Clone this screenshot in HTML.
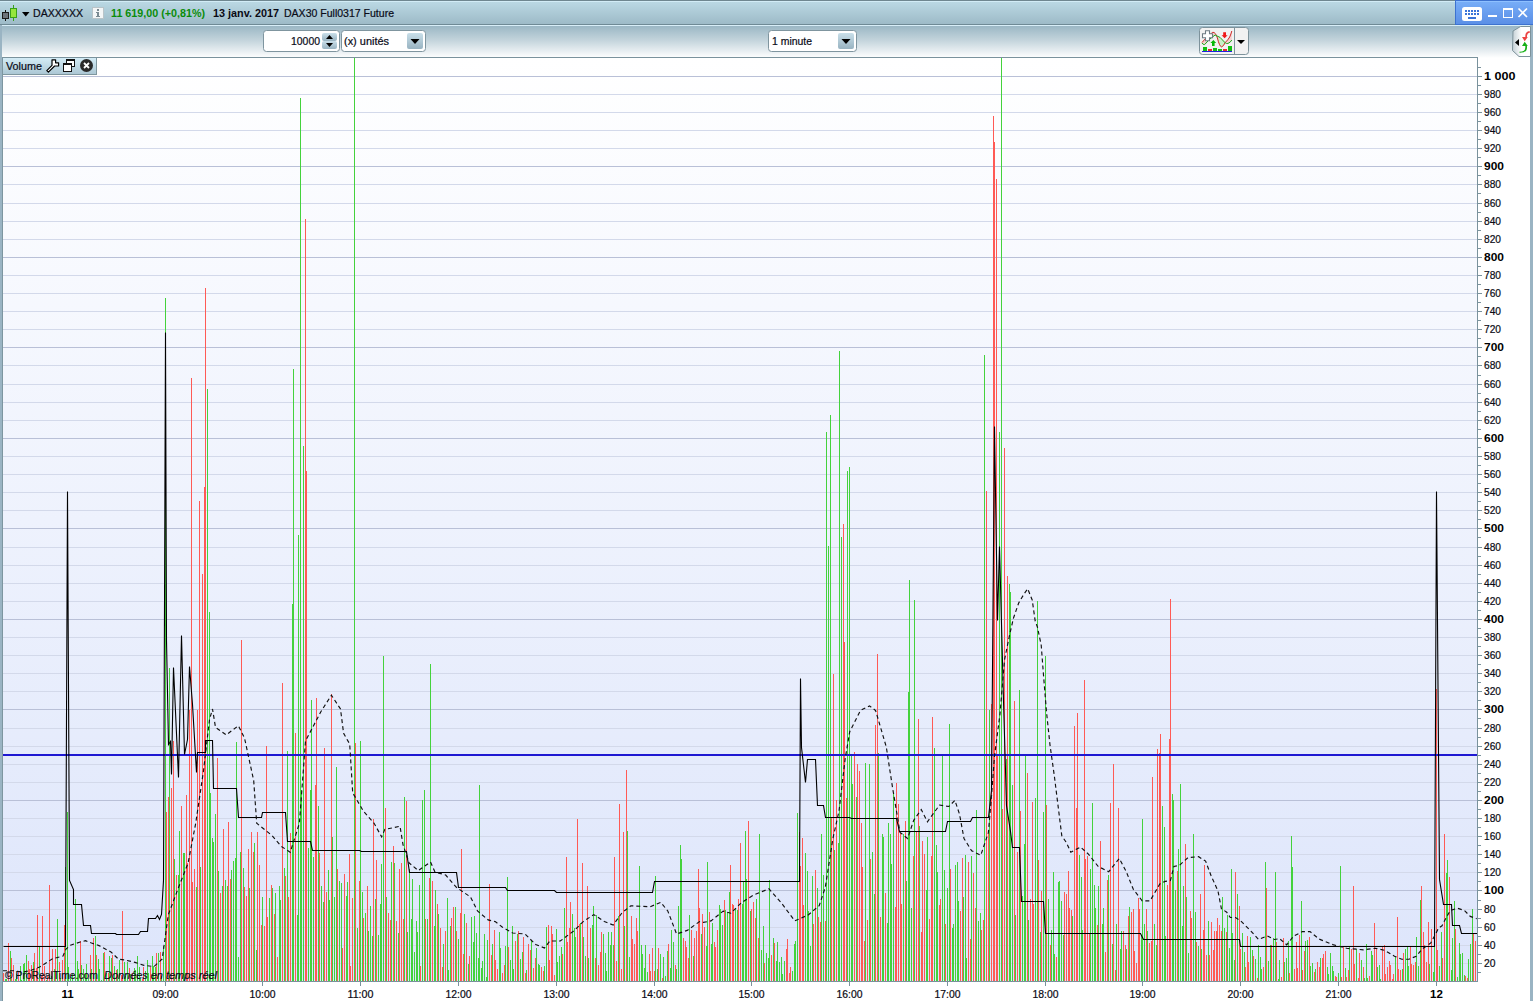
<!DOCTYPE html><html><head><meta charset="utf-8"><style>
html,body{margin:0;padding:0;width:1533px;height:1001px;overflow:hidden;background:#fff;}
svg{position:absolute;left:0;top:0;display:block}
text{font-family:"Liberation Sans",sans-serif;}
</style></head><body>
<svg width="1533" height="1001" viewBox="0 0 1533 1001" shape-rendering="crispEdges">
<defs>
<linearGradient id="gTitle" x1="0" y1="0" x2="0" y2="1"><stop offset="0" stop-color="#bddbe6"/><stop offset="1" stop-color="#9cb9c6"/></linearGradient>
<linearGradient id="gTool" x1="0" y1="0" x2="0" y2="1"><stop offset="0" stop-color="#98b5c3"/><stop offset="0.45" stop-color="#c2d3db"/><stop offset="1" stop-color="#ffffff"/></linearGradient>
<linearGradient id="gBlue" x1="0" y1="0" x2="0" y2="1"><stop offset="0" stop-color="#78aef8"/><stop offset="1" stop-color="#5b8fe6"/></linearGradient>
<linearGradient id="gChart" x1="0" y1="0" x2="0" y2="1"><stop offset="0" stop-color="#ffffff"/><stop offset="1" stop-color="#dde5fb"/></linearGradient>
<linearGradient id="gTab" x1="0" y1="0" x2="0" y2="1"><stop offset="0" stop-color="#d4ecf6"/><stop offset="1" stop-color="#a9c5d2"/></linearGradient>
<linearGradient id="gBtn" x1="0" y1="0" x2="0" y2="1"><stop offset="0" stop-color="#c9dfe9"/><stop offset="1" stop-color="#98b3c1"/></linearGradient>
<linearGradient id="gSide" x1="0" y1="0" x2="1" y2="0"><stop offset="0" stop-color="#c4d0d6"/><stop offset="0.5" stop-color="#ffffff"/><stop offset="1" stop-color="#ffffff"/></linearGradient>
</defs>

<rect x="0" y="0" width="1533" height="25" fill="url(#gTitle)"/>
<rect x="0" y="0" width="1533" height="1" fill="#6f8790"/>
<rect x="0" y="1" width="1533" height="1" fill="#d2ecf6"/>
<rect x="0" y="24" width="1533" height="1" fill="#6f8a95"/>
<rect x="0" y="25" width="1533" height="33" fill="url(#gTool)"/>
<rect x="0" y="25" width="1533" height="1" fill="#d8eef8"/>
<rect x="1455" y="0" width="78" height="25" fill="#3d72cf"/>
<rect x="1456" y="1" width="77" height="23" fill="url(#gBlue)"/>
<rect x="1456" y="1" width="77" height="1" fill="#8ec0ff"/>
<rect x="1462" y="7" width="20" height="14" rx="2.5" fill="#ffffff" shape-rendering="geometricPrecision"/>
<rect x="1465" y="10" width="2" height="2" fill="#3b74d8"/>
<rect x="1465" y="13" width="2" height="2" fill="#3b74d8"/>
<rect x="1468" y="10" width="2" height="2" fill="#3b74d8"/>
<rect x="1468" y="13" width="2" height="2" fill="#3b74d8"/>
<rect x="1471" y="10" width="2" height="2" fill="#3b74d8"/>
<rect x="1471" y="13" width="2" height="2" fill="#3b74d8"/>
<rect x="1474" y="10" width="2" height="2" fill="#3b74d8"/>
<rect x="1474" y="13" width="2" height="2" fill="#3b74d8"/>
<rect x="1477" y="10" width="2" height="2" fill="#3b74d8"/>
<rect x="1477" y="13" width="2" height="2" fill="#3b74d8"/>
<rect x="1468" y="17" width="8" height="2" fill="#3b74d8"/>
<rect x="1488" y="15" width="9" height="2" fill="#ffffff"/>
<rect x="1503" y="8" width="9" height="9" fill="none" stroke="#ffffff" stroke-width="1" />
<rect x="1503" y="8" width="9" height="2" fill="#ffffff"/>
<path d="M1518.5 8.5 L1527 17 M1527 8.5 L1518.5 17" stroke="#ffffff" stroke-width="1.6" shape-rendering="geometricPrecision"/>
<rect x="0" y="25" width="2" height="976" fill="#9ab4c3"/>
<rect x="2" y="57" width="1" height="944" fill="#7d96a0"/>
<rect x="1530" y="25" width="3" height="976" fill="#9ab4c3"/>
<rect x="5" y="10" width="1" height="11" fill="#111"/>
<rect x="2" y="12" width="7" height="7" fill="#1a1a1a"/><rect x="3" y="13" width="5" height="5" fill="#6d737a"/>
<rect x="13" y="5" width="1" height="16" fill="#3aa01a"/>
<rect x="10" y="8" width="7" height="10" fill="#3aa01a"/><rect x="11" y="9" width="5" height="8" fill="#96e63c"/>
<path d="M22 12 L29.5 12 L25.75 16.5 Z" fill="#000" shape-rendering="geometricPrecision"/>
<text x="33" y="17" font-size="11" fill="#0a0c18" stroke="#0a0c18" stroke-width="0.22" textLength="50" lengthAdjust="spacingAndGlyphs">DAXXXXX</text>
<rect x="92.5" y="7.5" width="11" height="11" fill="#f4f6f7" stroke="#b9c4c9" stroke-width="1"/>
<rect x="97" y="9" width="2" height="2" fill="#7a8a92"/><rect x="97" y="12" width="2" height="5" fill="#7a8a92"/><rect x="96" y="12" width="1" height="1" fill="#7a8a92"/><rect x="96" y="16" width="4" height="1" fill="#7a8a92"/>
<text x="111" y="17" font-size="11" font-weight="bold" fill="#0a8c0a" textLength="94" lengthAdjust="spacingAndGlyphs">11 619,00 (+0,81%)</text>
<text x="213" y="17" font-size="11" font-weight="bold" fill="#0a0a14" textLength="66" lengthAdjust="spacingAndGlyphs">13 janv. 2017</text>
<text x="284" y="17" font-size="11" fill="#0a0c18" stroke="#0a0c18" stroke-width="0.22" textLength="110" lengthAdjust="spacingAndGlyphs">DAX30 Full0317 Future</text>
<rect x="263.5" y="30.5" width="76" height="21" rx="3" fill="#ffffff" stroke="#7f959f" stroke-width="1" shape-rendering="geometricPrecision"/>
<rect x="322" y="33" width="15" height="8" rx="2" fill="url(#gBtn)" shape-rendering="geometricPrecision"/>
<rect x="322" y="41" width="15" height="8" rx="2" fill="url(#gBtn)" shape-rendering="geometricPrecision"/>
<path d="M326 39 L333 39 L329.5 35 Z" fill="#000" shape-rendering="geometricPrecision"/>
<path d="M326 43 L333 43 L329.5 47 Z" fill="#000" shape-rendering="geometricPrecision"/>
<text x="291" y="45" font-size="11" fill="#0a0c18" stroke="#0a0c18" stroke-width="0.22" textLength="29" lengthAdjust="spacingAndGlyphs">10000</text>
<rect x="341.5" y="30.5" width="84" height="21" rx="3" fill="#ffffff" stroke="#7f959f" stroke-width="1" shape-rendering="geometricPrecision"/>
<rect x="407" y="33" width="16" height="16" rx="2" fill="url(#gBtn)" shape-rendering="geometricPrecision"/>
<path d="M410.5 39 L419.5 39 L415 44 Z" fill="#000" shape-rendering="geometricPrecision"/>
<text x="344" y="45" font-size="11" fill="#0a0c18" stroke="#0a0c18" stroke-width="0.22" textLength="45" lengthAdjust="spacingAndGlyphs">(x) unités</text>
<rect x="768.5" y="30.5" width="88" height="21" rx="3" fill="#ffffff" stroke="#7f959f" stroke-width="1" shape-rendering="geometricPrecision"/>
<rect x="838" y="33" width="16" height="16" rx="2" fill="url(#gBtn)" shape-rendering="geometricPrecision"/>
<path d="M841.5 39 L850.5 39 L846 44 Z" fill="#000" shape-rendering="geometricPrecision"/>
<text x="772" y="45" font-size="11" fill="#0a0c18" stroke="#0a0c18" stroke-width="0.22" textLength="40" lengthAdjust="spacingAndGlyphs">1 minute</text>
<rect x="1199.5" y="27.5" width="49" height="27" rx="3" fill="#f2f2f2" stroke="#7d929b" stroke-width="1" shape-rendering="geometricPrecision"/>
<rect x="1234" y="28" width="1" height="26" fill="#7d929b"/>
<path d="M1237 40 L1245 40 L1241 44 Z" fill="#000" shape-rendering="geometricPrecision"/>
<g shape-rendering="geometricPrecision">
<path d="M1202 42.5 Q1207 36 1212.8 32.3 Q1215.5 32 1217.4 38 Q1219.5 46.5 1221.5 46.9 Q1223.5 46.5 1225.2 42.5 Q1228 40 1229.7 37 Q1231 34 1231.8 31 L1231.8 40 Q1229 43.5 1227.9 43.5 Q1226 43.5 1225.2 42.8 Q1220 38 1215.1 35 Q1208 39 1204.6 44.6 Q1203 44 1202 43 Z" fill="#f4c8c8" fill-opacity="0.8"/>
<path d="M1217.4 38 Q1219.5 46.5 1221.5 46.9 Q1223.5 46.5 1225.2 42.8 Q1220 38 1217.4 37.5 Z" fill="#c8f0c8"/>
<path d="M1202 42.5 Q1207 36 1212.8 32.3 Q1215.5 32 1217.4 38 Q1219.5 46.5 1221.5 46.9 Q1223.5 46.5 1225.2 42.5 Q1228 40 1229.7 37 Q1231 34 1231.8 31" fill="none" stroke="#d02828" stroke-width="1"/>
<path d="M1202 43 Q1203 44.8 1204.6 44.6 Q1210 38 1215.1 35 Q1220 36 1225.2 42.8 Q1226.5 43.8 1227.9 43.5 Q1230.5 42.5 1231.8 40" fill="none" stroke="#18a818" stroke-width="1"/>
<path d="M1223.2 32.3 h2.8 v3 h1.6 l-3 3 l-3 -3 h1.6z" fill="#f01818"/>
<path d="M1213.4 40 l2.8 3 h-1.6 v3 h-2.6 v-3 h-1.6z" fill="#08b808"/>
<path d="M1205.5 30.7 h4 v3 h3 v4 h-3 v3 h-4 v-3 h-3 v-4 h3z" fill="#fff" stroke="#6e7b83" stroke-width="1.1"/>
</g>
<rect x="1203" y="47" width="4" height="4" fill="#10c010"/><rect x="1208" y="49" width="4" height="2" fill="#e03030"/><rect x="1213" y="48" width="4" height="3" fill="#10c010"/><rect x="1218" y="49" width="4" height="2" fill="#10c010"/><rect x="1223" y="49" width="4" height="2" fill="#e03030"/><rect x="1228" y="46" width="4" height="5" fill="#10c010"/>
<rect x="1202" y="51" width="30" height="1" fill="#2020e0"/>
<path d="M1530.5 26.5 L1520.5 26.5 L1513 31 L1512.5 50.5 L1519 56.5 L1530.5 56.5 Z" fill="url(#gSide)" stroke="#7d929b" stroke-width="1" shape-rendering="geometricPrecision"/>
<path d="M1515 42.5 L1519 39 L1519 46 Z" fill="#000" shape-rendering="geometricPrecision"/>
<path d="M1529.5 31 Q1525.5 31.5 1525.3 35.5 L1525.3 37 L1522 37 L1524.7 41.3 L1527.8 37 L1527 37 L1527 35.5 Q1527.3 33 1530 32.5 Z" fill="#ec4444" shape-rendering="geometricPrecision"/>
<path d="M1519.5 51.8 Q1525.3 51.8 1525.3 47.5 L1525.3 46 L1522 46 L1524.7 41.8 L1527.8 46 L1527 46 L1527 47.5 Q1527 53 1519.5 52.8 Z" fill="#18b018" shape-rendering="geometricPrecision"/>
<rect x="3" y="58" width="1474" height="923" fill="url(#gChart)"/>
<rect x="3" y="963" width="1474" height="1" fill="#d3d9ea"/>
<rect x="3" y="945" width="1474" height="1" fill="#d3d9ea"/>
<rect x="3" y="927" width="1474" height="1" fill="#d3d9ea"/>
<rect x="3" y="909" width="1474" height="1" fill="#d3d9ea"/>
<rect x="3" y="890" width="1474" height="1" fill="#b9c0d7"/>
<rect x="3" y="872" width="1474" height="1" fill="#d3d9ea"/>
<rect x="3" y="854" width="1474" height="1" fill="#d3d9ea"/>
<rect x="3" y="836" width="1474" height="1" fill="#d3d9ea"/>
<rect x="3" y="818" width="1474" height="1" fill="#d3d9ea"/>
<rect x="3" y="800" width="1474" height="1" fill="#b9c0d7"/>
<rect x="3" y="782" width="1474" height="1" fill="#d3d9ea"/>
<rect x="3" y="764" width="1474" height="1" fill="#d3d9ea"/>
<rect x="3" y="746" width="1474" height="1" fill="#d3d9ea"/>
<rect x="3" y="728" width="1474" height="1" fill="#d3d9ea"/>
<rect x="3" y="709" width="1474" height="1" fill="#b9c0d7"/>
<rect x="3" y="691" width="1474" height="1" fill="#d3d9ea"/>
<rect x="3" y="673" width="1474" height="1" fill="#d3d9ea"/>
<rect x="3" y="655" width="1474" height="1" fill="#d3d9ea"/>
<rect x="3" y="637" width="1474" height="1" fill="#d3d9ea"/>
<rect x="3" y="619" width="1474" height="1" fill="#b9c0d7"/>
<rect x="3" y="601" width="1474" height="1" fill="#d3d9ea"/>
<rect x="3" y="583" width="1474" height="1" fill="#d3d9ea"/>
<rect x="3" y="565" width="1474" height="1" fill="#d3d9ea"/>
<rect x="3" y="547" width="1474" height="1" fill="#d3d9ea"/>
<rect x="3" y="528" width="1474" height="1" fill="#b9c0d7"/>
<rect x="3" y="510" width="1474" height="1" fill="#d3d9ea"/>
<rect x="3" y="492" width="1474" height="1" fill="#d3d9ea"/>
<rect x="3" y="474" width="1474" height="1" fill="#d3d9ea"/>
<rect x="3" y="456" width="1474" height="1" fill="#d3d9ea"/>
<rect x="3" y="438" width="1474" height="1" fill="#b9c0d7"/>
<rect x="3" y="420" width="1474" height="1" fill="#d3d9ea"/>
<rect x="3" y="402" width="1474" height="1" fill="#d3d9ea"/>
<rect x="3" y="384" width="1474" height="1" fill="#d3d9ea"/>
<rect x="3" y="365" width="1474" height="1" fill="#d3d9ea"/>
<rect x="3" y="347" width="1474" height="1" fill="#b9c0d7"/>
<rect x="3" y="329" width="1474" height="1" fill="#d3d9ea"/>
<rect x="3" y="311" width="1474" height="1" fill="#d3d9ea"/>
<rect x="3" y="293" width="1474" height="1" fill="#d3d9ea"/>
<rect x="3" y="275" width="1474" height="1" fill="#d3d9ea"/>
<rect x="3" y="257" width="1474" height="1" fill="#b9c0d7"/>
<rect x="3" y="239" width="1474" height="1" fill="#d3d9ea"/>
<rect x="3" y="221" width="1474" height="1" fill="#d3d9ea"/>
<rect x="3" y="203" width="1474" height="1" fill="#d3d9ea"/>
<rect x="3" y="184" width="1474" height="1" fill="#d3d9ea"/>
<rect x="3" y="166" width="1474" height="1" fill="#b9c0d7"/>
<rect x="3" y="148" width="1474" height="1" fill="#d3d9ea"/>
<rect x="3" y="130" width="1474" height="1" fill="#d3d9ea"/>
<rect x="3" y="112" width="1474" height="1" fill="#d3d9ea"/>
<rect x="3" y="94" width="1474" height="1" fill="#d3d9ea"/>
<rect x="3" y="76" width="1474" height="1" fill="#b9c0d7"/>
<path d="M3.5 981V973M8.5 981V943M11.5 981V958M13.5 981V965M18.5 981V972M28.5 981V961M29.5 981V969M31.5 981V965M34.5 981V953M36.5 981V968M37.5 981V915M41.5 981V976M42.5 981V916M44.5 981V966M47.5 981V976M49.5 981V885M52.5 981V949M55.5 981V949M59.5 981V962M62.5 981V960M64.5 981V925M80.5 981V941M90.5 981V955M93.5 981V938M96.5 981V955M104.5 981V952M108.5 981V973M112.5 981V955M116.5 981V970M121.5 981V975M122.5 981V911M129.5 981V968M132.5 981V973M142.5 981V979M143.5 981V967M150.5 981V967M156.5 981V953M160.5 981V952M166.5 981V812M168.5 981V797M171.5 981V788M173.5 981V741M176.5 981V875M181.5 981V806M186.5 981V795M187.5 981V863M189.5 981V710M191.5 981V378M192.5 981V882M194.5 981V869M197.5 981V710M199.5 981V501M202.5 981V574M204.5 981V487M205.5 981V288M217.5 981V758M220.5 981V893M223.5 981V829M228.5 981V822M230.5 981V879M241.5 981V640M244.5 981V887M246.5 981V896M248.5 981V849M251.5 981V832M253.5 981V852M257.5 981V832M259.5 981V865M261.5 981V925M264.5 981V926M266.5 981V746M267.5 981V917M271.5 981V885M274.5 981V914M277.5 981V957M282.5 981V683M285.5 981V876M288.5 981V897M290.5 981V833M295.5 981V733M305.5 981V219M306.5 981V471M315.5 981V785M316.5 981V698M319.5 981V853M324.5 981V748M326.5 981V892M331.5 981V694M337.5 981V869M342.5 981V948M344.5 981V874M349.5 981V854M350.5 981V966M352.5 981V898M355.5 981V743M359.5 981V881M363.5 981V918M367.5 981V886M373.5 981V819M376.5 981V860M385.5 981V808M388.5 981V913M390.5 981V920M393.5 981V846M396.5 981V921M399.5 981V869M401.5 981V863M403.5 981V919M406.5 981V801M420.5 981V966M425.5 981V919M429.5 981V878M432.5 981V881M437.5 981V904M440.5 981V928M442.5 981V967M445.5 981V931M451.5 981V918M453.5 981V907M456.5 981V931M460.5 981V913M461.5 981V849M463.5 981V954M466.5 981V923M469.5 981V956M489.5 981V884M491.5 981V955M494.5 981V930M495.5 981V960M497.5 981V969M502.5 981V973M504.5 981V965M508.5 981V947M515.5 981V941M518.5 981V931M523.5 981V937M525.5 981V973M528.5 981V944M530.5 981V950M533.5 981V968M535.5 981V958M541.5 981V967M543.5 981V971M548.5 981V925M549.5 981V960M551.5 981V926M552.5 981V934M554.5 981V975M562.5 981V954M566.5 981V857M567.5 981V942M569.5 981V928M570.5 981V902M577.5 981V819M579.5 981V924M582.5 981V863M587.5 981V886M590.5 981V928M595.5 981V958M598.5 981V965M600.5 981V952M601.5 981V932M614.5 981V857M616.5 981V961M619.5 981V804M621.5 981V969M623.5 981V832M626.5 981V770M631.5 981V916M632.5 981V939M634.5 981V944M636.5 981V918M637.5 981V931M649.5 981V954M650.5 981V971M652.5 981V948M654.5 981V971M658.5 981V948M662.5 981V978M668.5 981V944M675.5 981V965M683.5 981V938M685.5 981V941M686.5 981V947M688.5 981V958M691.5 981V930M694.5 981V938M696.5 981V931M698.5 981V869M699.5 981V908M702.5 981V914M704.5 981V927M709.5 981V912M714.5 981V942M715.5 981V947M717.5 981V930M724.5 981V900M730.5 981V865M732.5 981V904M733.5 981V905M738.5 981V899M740.5 981V843M748.5 981V821M751.5 981V909M753.5 981V902M755.5 981V918M758.5 981V938M764.5 981V963M771.5 981V955M774.5 981V943M786.5 981V949M787.5 981V939M789.5 981V973M790.5 981V967M799.5 981V832M800.5 981V866M802.5 981V838M803.5 981V905M813.5 981V924M815.5 981V870M818.5 981V917M820.5 981V922M825.5 981V921M831.5 981V818M833.5 981V674M836.5 981V800M843.5 981V524M844.5 981V642M846.5 981V798M854.5 981V752M857.5 981V764M859.5 981V771M861.5 981V823M862.5 981V867M864.5 981V941M867.5 981V920M870.5 981V859M875.5 981V725M877.5 981V654M880.5 981V917M885.5 981V893M895.5 981V907M896.5 981V783M898.5 981V804M900.5 981V833M901.5 981V904M905.5 981V821M913.5 981V856M916.5 981V831M918.5 981V719M921.5 981V932M922.5 981V841M924.5 981V854M929.5 981V919M931.5 981V856M932.5 981V717M939.5 981V905M940.5 981V899M945.5 981V924M950.5 981V869M960.5 981V911M962.5 981V858M968.5 981V862M970.5 981V939M973.5 981V873M975.5 981V908M981.5 981V930M983.5 981V920M986.5 981V491M988.5 981V831M991.5 981V704M993.5 981V116M994.5 981V142M996.5 981V179M997.5 981V756M1002.5 981V809M1004.5 981V448M1007.5 981V576M1014.5 981V701M1017.5 981V852M1020.5 981V811M1027.5 981V773M1030.5 981V899M1032.5 981V802M1033.5 981V904M1038.5 981V860M1041.5 981V891M1046.5 981V805M1050.5 981V945M1056.5 981V957M1064.5 981V892M1066.5 981V894M1068.5 981V871M1069.5 981V908M1071.5 981V910M1074.5 981V726M1076.5 981V808M1077.5 981V713M1084.5 981V680M1085.5 981V859M1087.5 981V856M1089.5 981V934M1097.5 981V925M1100.5 981V841M1105.5 981V952M1107.5 981V880M1110.5 981V803M1113.5 981V764M1115.5 981V970M1118.5 981V808M1123.5 981V931M1125.5 981V945M1128.5 981V916M1131.5 981V912M1133.5 981V909M1134.5 981V951M1136.5 981V963M1138.5 981V898M1139.5 981V909M1146.5 981V909M1149.5 981V943M1151.5 981V941M1152.5 981V777M1157.5 981V749M1159.5 981V753M1160.5 981V734M1167.5 981V885M1169.5 981V739M1170.5 981V599M1177.5 981V871M1185.5 981V844M1190.5 981V911M1191.5 981V918M1196.5 981V942M1200.5 981V894M1203.5 981V930M1204.5 981V865M1206.5 981V955M1209.5 981V955M1211.5 981V922M1213.5 981V950M1214.5 981V931M1216.5 981V931M1217.5 981V918M1219.5 981V925M1221.5 981V931M1226.5 981V932M1235.5 981V872M1239.5 981V906M1240.5 981V949M1245.5 981V967M1247.5 981V936M1248.5 981V962M1253.5 981V956M1257.5 981V978M1263.5 981V967M1266.5 981V888M1271.5 981V945M1276.5 981V942M1281.5 981V977M1283.5 981V938M1289.5 981V973M1294.5 981V969M1296.5 981V942M1297.5 981V968M1299.5 981V935M1302.5 981V970M1304.5 981V951M1309.5 981V937M1314.5 981V972M1317.5 981V962M1319.5 981V967M1322.5 981V958M1323.5 981V954M1325.5 981V951M1335.5 981V976M1336.5 981V977M1341.5 981V977M1343.5 981V946M1346.5 981V977M1348.5 981V970M1351.5 981V949M1353.5 981V886M1354.5 981V964M1358.5 981V978M1359.5 981V953M1363.5 981V967M1369.5 981V976M1374.5 981V923M1376.5 981V949M1382.5 981V946M1384.5 981V945M1385.5 981V974M1387.5 981V967M1389.5 981V961M1390.5 981V965M1392.5 981V979M1393.5 981V974M1397.5 981V917M1398.5 981V969M1400.5 981V970M1403.5 981V953M1410.5 981V946M1411.5 981V964M1413.5 981V965M1415.5 981V962M1421.5 981V886M1423.5 981V932M1424.5 981V945M1426.5 981V962M1428.5 981V922M1431.5 981V929M1436.5 981V689M1437.5 981V950M1442.5 981V958M1444.5 981V834M1449.5 981V877M1455.5 981V929M1465.5 981V976M1467.5 981V978M1473.5 981V934M1475.5 981V941" stroke="#ff5a55" stroke-width="1" fill="none"/>
<path d="M5.5 981V979M6.5 981V979M10.5 981V951M15.5 981V979M16.5 981V974M20.5 981V966M21.5 981V980M23.5 981V964M24.5 981V963M26.5 981V955M33.5 981V962M39.5 981V947M46.5 981V980M51.5 981V976M54.5 981V969M57.5 981V919M60.5 981V978M65.5 981V867M67.5 981V812M68.5 981V967M70.5 981V977M72.5 981V974M75.5 981V899M77.5 981V961M78.5 981V969M81.5 981V965M83.5 981V969M85.5 981V974M86.5 981V964M88.5 981V978M91.5 981V969M95.5 981V936M98.5 981V959M99.5 981V969M101.5 981V980M103.5 981V953M106.5 981V973M109.5 981V956M111.5 981V958M114.5 981V966M117.5 981V969M119.5 981V960M124.5 981V962M125.5 981V976M127.5 981V962M130.5 981V974M134.5 981V968M135.5 981V970M137.5 981V956M139.5 981V967M140.5 981V979M145.5 981V971M147.5 981V960M148.5 981V973M152.5 981V956M153.5 981V966M155.5 981V967M158.5 981V953M161.5 981V976M163.5 981V946M165.5 981V298M169.5 981V668M174.5 981V859M178.5 981V875M179.5 981V831M183.5 981V853M184.5 981V853M196.5 981V887M200.5 981V867M207.5 981V389M209.5 981V612M210.5 981V793M212.5 981V838M213.5 981V842M215.5 981V814M218.5 981V871M222.5 981V886M225.5 981V880M227.5 981V886M231.5 981V870M233.5 981V861M235.5 981V858M236.5 981V742M238.5 981V957M240.5 981V852M243.5 981V868M249.5 981V888M254.5 981V843M256.5 981V950M262.5 981V897M269.5 981V898M272.5 981V888M275.5 981V893M279.5 981V886M280.5 981V900M284.5 981V868M287.5 981V751M292.5 981V604M293.5 981V369M297.5 981V915M298.5 981V535M300.5 981V98M301.5 981V790M303.5 981V446M308.5 981V848M310.5 981V790M311.5 981V700M313.5 981V857M318.5 981V806M321.5 981V886M323.5 981V902M328.5 981V870M329.5 981V900M332.5 981V837M334.5 981V897M336.5 981V767M339.5 981V881M341.5 981V883M346.5 981V896M347.5 981V882M354.5 981V58M357.5 981V928M360.5 981V741M362.5 981V892M365.5 981V913M368.5 981V931M370.5 981V906M372.5 981V936M375.5 981V899M378.5 981V935M380.5 981V904M381.5 981V864M383.5 981V656M386.5 981V897M391.5 981V862M394.5 981V863M398.5 981V933M404.5 981V797M407.5 981V932M409.5 981V869M411.5 981V919M412.5 981V879M414.5 981V952M416.5 981V921M417.5 981V932M419.5 981V885M422.5 981V800M424.5 981V790M427.5 981V919M430.5 981V664M434.5 981V926M435.5 981V890M438.5 981V914M443.5 981V944M447.5 981V898M448.5 981V970M450.5 981V926M455.5 981V907M458.5 981V939M464.5 981V914M468.5 981V964M471.5 981V917M473.5 981V942M474.5 981V916M476.5 981V933M478.5 981V958M479.5 981V785M481.5 981V968M482.5 981V961M484.5 981V934M486.5 981V977M487.5 981V940M492.5 981V944M499.5 981V932M500.5 981V948M505.5 981V946M507.5 981V877M510.5 981V960M512.5 981V926M513.5 981V969M517.5 981V934M520.5 981V959M522.5 981V952M526.5 981V970M531.5 981V940M536.5 981V948M538.5 981V964M539.5 981V965M544.5 981V966M546.5 981V927M556.5 981V929M557.5 981V962M559.5 981V956M561.5 981V947M564.5 981V908M572.5 981V914M574.5 981V928M575.5 981V937M580.5 981V923M583.5 981V937M585.5 981V956M588.5 981V958M592.5 981V925M593.5 981V906M596.5 981V915M603.5 981V934M605.5 981V953M606.5 981V971M608.5 981V932M610.5 981V945M611.5 981V932M613.5 981V945M618.5 981V916M624.5 981V926M627.5 981V831M629.5 981V957M639.5 981V866M641.5 981V945M642.5 981V954M644.5 981V968M645.5 981V945M647.5 981V972M655.5 981V876M657.5 981V969M660.5 981V954M663.5 981V957M665.5 981V976M667.5 981V951M670.5 981V968M671.5 981V930M673.5 981V942M676.5 981V969M678.5 981V906M680.5 981V845M681.5 981V859M689.5 981V915M693.5 981V956M701.5 981V934M706.5 981V946M707.5 981V862M711.5 981V944M712.5 981V923M719.5 981V905M720.5 981V909M722.5 981V925M725.5 981V910M727.5 981V912M729.5 981V892M735.5 981V909M737.5 981V910M742.5 981V904M743.5 981V882M745.5 981V831M746.5 981V879M750.5 981V911M756.5 981V899M759.5 981V834M761.5 981V950M763.5 981V926M766.5 981V953M768.5 981V958M769.5 981V880M773.5 981V938M776.5 981V961M777.5 981V942M779.5 981V962M781.5 981V957M782.5 981V974M784.5 981V961M792.5 981V971M794.5 981V944M795.5 981V941M797.5 981V813M805.5 981V853M807.5 981V871M808.5 981V911M810.5 981V946M812.5 981V876M817.5 981V888M821.5 981V834M823.5 981V875M826.5 981V432M828.5 981V546M830.5 981V415M834.5 981V850M838.5 981V843M839.5 981V351M841.5 981V537M847.5 981V471M849.5 981V467M851.5 981V754M852.5 981V784M856.5 981V797M865.5 981V763M869.5 981V764M872.5 981V852M874.5 981V894M878.5 981V753M882.5 981V834M883.5 981V837M887.5 981V923M888.5 981V823M890.5 981V834M891.5 981V864M893.5 981V794M903.5 981V834M906.5 981V881M908.5 981V692M909.5 981V580M911.5 981V908M914.5 981V600M919.5 981V826M926.5 981V890M927.5 981V837M934.5 981V748M936.5 981V845M937.5 981V872M942.5 981V755M944.5 981V870M947.5 981V888M949.5 981V724M952.5 981V928M953.5 981V924M955.5 981V865M957.5 981V862M958.5 981V901M963.5 981V897M965.5 981V855M966.5 981V958M971.5 981V856M976.5 981V810M978.5 981V921M980.5 981V913M984.5 981V355M989.5 981V710M999.5 981V432M1001.5 981V58M1006.5 981V759M1009.5 981V584M1010.5 981V592M1012.5 981V785M1015.5 981V915M1019.5 981V690M1022.5 981V896M1024.5 981V844M1025.5 981V755M1028.5 981V920M1035.5 981V798M1037.5 981V601M1040.5 981V932M1043.5 981V812M1045.5 981V656M1048.5 981V899M1051.5 981V930M1053.5 981V872M1054.5 981V954M1058.5 981V882M1059.5 981V881M1061.5 981V901M1063.5 981V935M1072.5 981V916M1079.5 981V855M1081.5 981V877M1082.5 981V930M1090.5 981V869M1092.5 981V803M1094.5 981V885M1095.5 981V908M1098.5 981V886M1102.5 981V924M1103.5 981V908M1108.5 981V875M1112.5 981V944M1116.5 981V924M1120.5 981V949M1121.5 981V931M1126.5 981V949M1129.5 981V907M1141.5 981V935M1142.5 981V819M1144.5 981V924M1147.5 981V931M1154.5 981V924M1156.5 981V945M1162.5 981V806M1164.5 981V827M1165.5 981V936M1172.5 981V794M1173.5 981V800M1175.5 981V890M1178.5 981V849M1180.5 981V784M1182.5 981V926M1183.5 981V886M1186.5 981V897M1188.5 981V953M1193.5 981V834M1195.5 981V912M1198.5 981V946M1201.5 981V949M1208.5 981V921M1222.5 981V897M1224.5 981V928M1227.5 981V915M1229.5 981V948M1231.5 981V869M1232.5 981V933M1234.5 981V960M1237.5 981V894M1242.5 981V933M1244.5 981V952M1250.5 981V937M1252.5 981V950M1255.5 981V959M1258.5 981V945M1260.5 981V957M1261.5 981V969M1265.5 981V862M1268.5 981V961M1270.5 981V945M1273.5 981V938M1275.5 981V872M1278.5 981V979M1279.5 981V960M1284.5 981V962M1286.5 981V958M1288.5 981V941M1291.5 981V836M1292.5 981V867M1301.5 981V901M1305.5 981V941M1307.5 981V940M1310.5 981V966M1312.5 981V963M1315.5 981V969M1320.5 981V958M1327.5 981V967M1328.5 981V974M1330.5 981V953M1332.5 981V966M1333.5 981V971M1338.5 981V973M1340.5 981V866M1345.5 981V968M1349.5 981V946M1356.5 981V949M1361.5 981V960M1364.5 981V978M1366.5 981V944M1367.5 981V978M1371.5 981V951M1372.5 981V955M1377.5 981V967M1379.5 981V965M1380.5 981V979M1395.5 981V957M1402.5 981V969M1405.5 981V949M1407.5 981V947M1408.5 981V966M1416.5 981V937M1418.5 981V966M1420.5 981V900M1429.5 981V964M1433.5 981V972M1434.5 981V935M1439.5 981V966M1441.5 981V932M1446.5 981V873M1447.5 981V860M1451.5 981V970M1452.5 981V938M1454.5 981V901M1457.5 981V977M1459.5 981V943M1460.5 981V954M1462.5 981V953M1464.5 981V975M1468.5 981V959M1470.5 981V944M1472.5 981V909" stroke="#44d23c" stroke-width="1" fill="none"/>
<rect x="3" y="754" width="1474" height="2" fill="#1e18d2"/>
<polyline points="3.5,946.5 65.5,946.5 67.5,491.5 69.5,880.5 73.5,889.5 73.5,904.5 81.5,904.5 83.5,925.5 90.5,925.5 91.5,933.5 115.5,933.5 116.5,934.5 138.5,934.5 140.5,931.5 147.5,931.5 148.5,918.5 155.5,918.5 157.5,915.5 159.5,919.5 161.5,914.5 163.5,880.5 165.5,332.5 166.5,640.5 168.5,744.5 170.5,741.5 171.5,774.5 173.5,667.5 178.5,777.5 181.5,635.5 184.5,754.5 187.5,739.5 189.5,666.5 192.5,704.5 196.5,772.5 197.5,752.5 205.5,752.5 205.5,740.5 212.5,740.5 213.5,788.5 236.5,788.5 238.5,817.5 261.5,817.5 262.5,812.5 285.5,812.5 287.5,841.5 310.5,841.5 312.5,850.5 359.5,850.5 361.5,851.5 406.5,851.5 409.5,872.5 456.5,872.5 458.5,887.5 505.5,887.5 507.5,890.5 554.5,890.5 556.5,892.5 652.5,892.5 654.5,881.5 799.5,881.5 800.5,678.5 801.5,747.5 805.5,782.5 807.5,759.5 815.5,759.5 817.5,805.5 823.5,805.5 825.5,817.5 849.5,817.5 851.5,818.5 896.5,818.5 899.5,831.5 945.5,831.5 947.5,821.5 970.5,821.5 972.5,817.5 988.5,817.5 991.5,790.5 994.5,426.5 997.5,620.5 999.5,546.5 1003.5,700.5 1006.5,805.5 1010.5,831.5 1012.5,847.5 1019.5,847.5 1021.5,901.5 1043.5,901.5 1045.5,933.5 1140.5,933.5 1143.5,939.5 1239.5,939.5 1240.5,946.5 1434.5,946.5 1436.5,491.5 1439.5,879.5 1443.5,904.5 1451.5,904.5 1452.5,925.5 1459.5,925.5 1461.5,933.5 1477.5,933.5" fill="none" stroke="#000" stroke-width="1.1" shape-rendering="geometricPrecision" stroke-linejoin="miter"/>
<polyline points="3.0,970.7 13.5,970.7 22.5,972.2 30.0,970.7 39.7,967.0 48.0,961.7 52.5,958.7 63.0,956.1 66.0,949.0 70.5,945.2 79.5,942.2 85.5,940.7 91.5,943.0 99.0,945.6 111.0,952.0 118.4,959.1 126.0,960.2 135.0,962.4 144.0,965.4 154.0,966.5 162.2,959.0 168.3,914.8 177.4,890.4 188.1,863.0 195.7,823.3 203.4,771.5 209.5,719.6 212.5,709.0 215.5,727.3 226.2,734.9 238.4,725.7 244.5,738.0 253.7,780.6 256.7,823.3 272.0,835.5 281.1,846.2 290.2,852.3 299.4,823.3 305.5,741.0 320.7,712.0 331.4,695.2 340.5,709.0 343.6,733.4 349.7,744.0 352.7,792.8 363.4,811.1 374.1,823.3 381.7,837.0 384.8,829.4 400.0,826.3 403.0,844.6 409.1,863.0 418.3,870.5 430.5,862.0 435.0,872.0 445.7,875.0 456.4,887.3 470.5,897.0 477.5,911.0 488.1,919.9 495.2,921.6 502.2,927.0 512.8,933.0 525.1,934.0 528.6,937.5 535.7,944.5 544.5,948.0 549.8,941.0 560.3,941.0 574.4,930.4 583.2,921.6 593.8,914.6 604.4,921.6 613.2,925.0 622.0,912.8 630.8,905.8 650.2,906.7 660.7,902.3 667.8,911.0 676.6,934.0 687.2,930.4 699.5,921.6 703.4,922.4 711.0,920.9 723.2,911.1 730.8,913.2 741.5,902.6 753.7,895.0 768.9,888.8 781.1,902.6 794.8,920.9 808.5,914.8 819.2,905.6 825.3,887.3 832.9,838.5 839.0,811.1 845.1,759.3 849.7,731.8 860.4,710.5 869.5,705.9 875.6,710.5 886.3,747.0 892.4,786.7 900.0,832.4 907.6,838.5 913.7,820.2 921.3,809.6 927.4,821.8 939.6,805.0 948.8,806.5 954.9,800.4 959.5,814.1 964.0,838.5 971.6,850.7 980.8,855.3 988.4,832.4 991.5,795.9 994.5,756.2 1000.0,714.0 1004.5,660.0 1009.7,634.4 1013.5,618.0 1018.7,603.0 1024.0,594.0 1027.7,588.7 1032.2,600.0 1035.2,621.0 1037.4,627.0 1041.2,645.0 1043.5,675.0 1046.5,712.0 1050.0,745.0 1054.3,775.6 1061.8,835.8 1066.4,842.6 1070.8,852.3 1080.5,847.0 1088.4,854.1 1098.1,866.4 1108.7,871.7 1119.3,858.5 1126.3,871.7 1133.3,889.3 1142.2,900.8 1150.1,900.8 1159.8,884.0 1165.1,881.4 1170.4,880.5 1173.9,866.4 1179.2,865.5 1188.0,857.6 1198.6,856.7 1205.6,861.1 1210.9,875.2 1218.0,891.1 1221.4,908.7 1226.7,912.2 1230.3,917.5 1235.5,917.5 1240.8,921.0 1251.4,931.6 1258.5,939.5 1267.3,936.0 1274.3,939.5 1279.6,938.6 1286.7,944.8 1293.7,936.0 1302.5,931.6 1310.0,931.6 1319.2,939.1 1332.9,944.6 1346.6,948.3 1363.4,949.8 1375.6,948.3 1384.8,950.4 1394.5,956.2 1401.8,959.2 1409.0,959.2 1416.3,956.2 1422.3,948.9 1430.8,942.9 1435.0,935.2 1438.5,928.1 1442.0,925.8 1445.6,918.7 1450.3,910.5 1457.3,908.2 1464.4,910.5 1470.3,916.4 1476.7,918.7" fill="none" stroke="#111" stroke-width="1.15" stroke-dasharray="4 3" shape-rendering="geometricPrecision"/>
<rect x="3" y="57" width="1475" height="1" fill="#7a929c"/>
<rect x="1477" y="57" width="1" height="925" fill="#7a929c"/>
<rect x="3" y="981" width="1475" height="1" fill="#7a929c"/>
<rect x="1478" y="972" width="3" height="1" fill="#7a929c"/>
<rect x="1478" y="963" width="4" height="1" fill="#7a929c"/>
<rect x="1478" y="954" width="3" height="1" fill="#7a929c"/>
<rect x="1478" y="945" width="4" height="1" fill="#7a929c"/>
<rect x="1478" y="936" width="3" height="1" fill="#7a929c"/>
<rect x="1478" y="927" width="4" height="1" fill="#7a929c"/>
<rect x="1478" y="918" width="3" height="1" fill="#7a929c"/>
<rect x="1478" y="909" width="4" height="1" fill="#7a929c"/>
<rect x="1478" y="900" width="3" height="1" fill="#7a929c"/>
<rect x="1478" y="890" width="4" height="1" fill="#7a929c"/>
<rect x="1478" y="881" width="3" height="1" fill="#7a929c"/>
<rect x="1478" y="872" width="4" height="1" fill="#7a929c"/>
<rect x="1478" y="863" width="3" height="1" fill="#7a929c"/>
<rect x="1478" y="854" width="4" height="1" fill="#7a929c"/>
<rect x="1478" y="845" width="3" height="1" fill="#7a929c"/>
<rect x="1478" y="836" width="4" height="1" fill="#7a929c"/>
<rect x="1478" y="827" width="3" height="1" fill="#7a929c"/>
<rect x="1478" y="818" width="4" height="1" fill="#7a929c"/>
<rect x="1478" y="809" width="3" height="1" fill="#7a929c"/>
<rect x="1478" y="800" width="4" height="1" fill="#7a929c"/>
<rect x="1478" y="791" width="3" height="1" fill="#7a929c"/>
<rect x="1478" y="782" width="4" height="1" fill="#7a929c"/>
<rect x="1478" y="773" width="3" height="1" fill="#7a929c"/>
<rect x="1478" y="764" width="4" height="1" fill="#7a929c"/>
<rect x="1478" y="755" width="3" height="1" fill="#7a929c"/>
<rect x="1478" y="746" width="4" height="1" fill="#7a929c"/>
<rect x="1478" y="737" width="3" height="1" fill="#7a929c"/>
<rect x="1478" y="728" width="4" height="1" fill="#7a929c"/>
<rect x="1478" y="718" width="3" height="1" fill="#7a929c"/>
<rect x="1478" y="709" width="4" height="1" fill="#7a929c"/>
<rect x="1478" y="700" width="3" height="1" fill="#7a929c"/>
<rect x="1478" y="691" width="4" height="1" fill="#7a929c"/>
<rect x="1478" y="682" width="3" height="1" fill="#7a929c"/>
<rect x="1478" y="673" width="4" height="1" fill="#7a929c"/>
<rect x="1478" y="664" width="3" height="1" fill="#7a929c"/>
<rect x="1478" y="655" width="4" height="1" fill="#7a929c"/>
<rect x="1478" y="646" width="3" height="1" fill="#7a929c"/>
<rect x="1478" y="637" width="4" height="1" fill="#7a929c"/>
<rect x="1478" y="628" width="3" height="1" fill="#7a929c"/>
<rect x="1478" y="619" width="4" height="1" fill="#7a929c"/>
<rect x="1478" y="610" width="3" height="1" fill="#7a929c"/>
<rect x="1478" y="601" width="4" height="1" fill="#7a929c"/>
<rect x="1478" y="592" width="3" height="1" fill="#7a929c"/>
<rect x="1478" y="583" width="4" height="1" fill="#7a929c"/>
<rect x="1478" y="574" width="3" height="1" fill="#7a929c"/>
<rect x="1478" y="565" width="4" height="1" fill="#7a929c"/>
<rect x="1478" y="556" width="3" height="1" fill="#7a929c"/>
<rect x="1478" y="547" width="4" height="1" fill="#7a929c"/>
<rect x="1478" y="537" width="3" height="1" fill="#7a929c"/>
<rect x="1478" y="528" width="4" height="1" fill="#7a929c"/>
<rect x="1478" y="519" width="3" height="1" fill="#7a929c"/>
<rect x="1478" y="510" width="4" height="1" fill="#7a929c"/>
<rect x="1478" y="501" width="3" height="1" fill="#7a929c"/>
<rect x="1478" y="492" width="4" height="1" fill="#7a929c"/>
<rect x="1478" y="483" width="3" height="1" fill="#7a929c"/>
<rect x="1478" y="474" width="4" height="1" fill="#7a929c"/>
<rect x="1478" y="465" width="3" height="1" fill="#7a929c"/>
<rect x="1478" y="456" width="4" height="1" fill="#7a929c"/>
<rect x="1478" y="447" width="3" height="1" fill="#7a929c"/>
<rect x="1478" y="438" width="4" height="1" fill="#7a929c"/>
<rect x="1478" y="429" width="3" height="1" fill="#7a929c"/>
<rect x="1478" y="420" width="4" height="1" fill="#7a929c"/>
<rect x="1478" y="411" width="3" height="1" fill="#7a929c"/>
<rect x="1478" y="402" width="4" height="1" fill="#7a929c"/>
<rect x="1478" y="393" width="3" height="1" fill="#7a929c"/>
<rect x="1478" y="384" width="4" height="1" fill="#7a929c"/>
<rect x="1478" y="375" width="3" height="1" fill="#7a929c"/>
<rect x="1478" y="365" width="4" height="1" fill="#7a929c"/>
<rect x="1478" y="356" width="3" height="1" fill="#7a929c"/>
<rect x="1478" y="347" width="4" height="1" fill="#7a929c"/>
<rect x="1478" y="338" width="3" height="1" fill="#7a929c"/>
<rect x="1478" y="329" width="4" height="1" fill="#7a929c"/>
<rect x="1478" y="320" width="3" height="1" fill="#7a929c"/>
<rect x="1478" y="311" width="4" height="1" fill="#7a929c"/>
<rect x="1478" y="302" width="3" height="1" fill="#7a929c"/>
<rect x="1478" y="293" width="4" height="1" fill="#7a929c"/>
<rect x="1478" y="284" width="3" height="1" fill="#7a929c"/>
<rect x="1478" y="275" width="4" height="1" fill="#7a929c"/>
<rect x="1478" y="266" width="3" height="1" fill="#7a929c"/>
<rect x="1478" y="257" width="4" height="1" fill="#7a929c"/>
<rect x="1478" y="248" width="3" height="1" fill="#7a929c"/>
<rect x="1478" y="239" width="4" height="1" fill="#7a929c"/>
<rect x="1478" y="230" width="3" height="1" fill="#7a929c"/>
<rect x="1478" y="221" width="4" height="1" fill="#7a929c"/>
<rect x="1478" y="212" width="3" height="1" fill="#7a929c"/>
<rect x="1478" y="203" width="4" height="1" fill="#7a929c"/>
<rect x="1478" y="193" width="3" height="1" fill="#7a929c"/>
<rect x="1478" y="184" width="4" height="1" fill="#7a929c"/>
<rect x="1478" y="175" width="3" height="1" fill="#7a929c"/>
<rect x="1478" y="166" width="4" height="1" fill="#7a929c"/>
<rect x="1478" y="157" width="3" height="1" fill="#7a929c"/>
<rect x="1478" y="148" width="4" height="1" fill="#7a929c"/>
<rect x="1478" y="139" width="3" height="1" fill="#7a929c"/>
<rect x="1478" y="130" width="4" height="1" fill="#7a929c"/>
<rect x="1478" y="121" width="3" height="1" fill="#7a929c"/>
<rect x="1478" y="112" width="4" height="1" fill="#7a929c"/>
<rect x="1478" y="103" width="3" height="1" fill="#7a929c"/>
<rect x="1478" y="94" width="4" height="1" fill="#7a929c"/>
<rect x="1478" y="85" width="3" height="1" fill="#7a929c"/>
<rect x="1478" y="76" width="4" height="1" fill="#7a929c"/>
<rect x="1478" y="67" width="3" height="1" fill="#7a929c"/>
<text x="1484" y="967.1" font-size="11" fill="#0a0a14" stroke="#0a0a14" stroke-width="0.22" textLength="11.5" lengthAdjust="spacingAndGlyphs">20</text>
<text x="1484" y="949.1" font-size="11" fill="#0a0a14" stroke="#0a0a14" stroke-width="0.22" textLength="11.5" lengthAdjust="spacingAndGlyphs">40</text>
<text x="1484" y="931.1" font-size="11" fill="#0a0a14" stroke="#0a0a14" stroke-width="0.22" textLength="11.5" lengthAdjust="spacingAndGlyphs">60</text>
<text x="1484" y="913.1" font-size="11" fill="#0a0a14" stroke="#0a0a14" stroke-width="0.22" textLength="11.5" lengthAdjust="spacingAndGlyphs">80</text>
<text x="1484" y="893.5" font-size="11.5" font-weight="bold" fill="#000" textLength="20" lengthAdjust="spacingAndGlyphs">100</text>
<text x="1484" y="876.1" font-size="11" fill="#0a0a14" stroke="#0a0a14" stroke-width="0.22" textLength="17" lengthAdjust="spacingAndGlyphs">120</text>
<text x="1484" y="858.1" font-size="11" fill="#0a0a14" stroke="#0a0a14" stroke-width="0.22" textLength="17" lengthAdjust="spacingAndGlyphs">140</text>
<text x="1484" y="840.1" font-size="11" fill="#0a0a14" stroke="#0a0a14" stroke-width="0.22" textLength="17" lengthAdjust="spacingAndGlyphs">160</text>
<text x="1484" y="822.1" font-size="11" fill="#0a0a14" stroke="#0a0a14" stroke-width="0.22" textLength="17" lengthAdjust="spacingAndGlyphs">180</text>
<text x="1484" y="803.5" font-size="11.5" font-weight="bold" fill="#000" textLength="20" lengthAdjust="spacingAndGlyphs">200</text>
<text x="1484" y="786.1" font-size="11" fill="#0a0a14" stroke="#0a0a14" stroke-width="0.22" textLength="17" lengthAdjust="spacingAndGlyphs">220</text>
<text x="1484" y="768.1" font-size="11" fill="#0a0a14" stroke="#0a0a14" stroke-width="0.22" textLength="17" lengthAdjust="spacingAndGlyphs">240</text>
<text x="1484" y="750.1" font-size="11" fill="#0a0a14" stroke="#0a0a14" stroke-width="0.22" textLength="17" lengthAdjust="spacingAndGlyphs">260</text>
<text x="1484" y="732.1" font-size="11" fill="#0a0a14" stroke="#0a0a14" stroke-width="0.22" textLength="17" lengthAdjust="spacingAndGlyphs">280</text>
<text x="1484" y="712.5" font-size="11.5" font-weight="bold" fill="#000" textLength="20" lengthAdjust="spacingAndGlyphs">300</text>
<text x="1484" y="695.1" font-size="11" fill="#0a0a14" stroke="#0a0a14" stroke-width="0.22" textLength="17" lengthAdjust="spacingAndGlyphs">320</text>
<text x="1484" y="677.1" font-size="11" fill="#0a0a14" stroke="#0a0a14" stroke-width="0.22" textLength="17" lengthAdjust="spacingAndGlyphs">340</text>
<text x="1484" y="659.1" font-size="11" fill="#0a0a14" stroke="#0a0a14" stroke-width="0.22" textLength="17" lengthAdjust="spacingAndGlyphs">360</text>
<text x="1484" y="641.1" font-size="11" fill="#0a0a14" stroke="#0a0a14" stroke-width="0.22" textLength="17" lengthAdjust="spacingAndGlyphs">380</text>
<text x="1484" y="622.5" font-size="11.5" font-weight="bold" fill="#000" textLength="20" lengthAdjust="spacingAndGlyphs">400</text>
<text x="1484" y="605.1" font-size="11" fill="#0a0a14" stroke="#0a0a14" stroke-width="0.22" textLength="17" lengthAdjust="spacingAndGlyphs">420</text>
<text x="1484" y="587.1" font-size="11" fill="#0a0a14" stroke="#0a0a14" stroke-width="0.22" textLength="17" lengthAdjust="spacingAndGlyphs">440</text>
<text x="1484" y="569.1" font-size="11" fill="#0a0a14" stroke="#0a0a14" stroke-width="0.22" textLength="17" lengthAdjust="spacingAndGlyphs">460</text>
<text x="1484" y="551.1" font-size="11" fill="#0a0a14" stroke="#0a0a14" stroke-width="0.22" textLength="17" lengthAdjust="spacingAndGlyphs">480</text>
<text x="1484" y="531.5" font-size="11.5" font-weight="bold" fill="#000" textLength="20" lengthAdjust="spacingAndGlyphs">500</text>
<text x="1484" y="514.1" font-size="11" fill="#0a0a14" stroke="#0a0a14" stroke-width="0.22" textLength="17" lengthAdjust="spacingAndGlyphs">520</text>
<text x="1484" y="496.1" font-size="11" fill="#0a0a14" stroke="#0a0a14" stroke-width="0.22" textLength="17" lengthAdjust="spacingAndGlyphs">540</text>
<text x="1484" y="478.1" font-size="11" fill="#0a0a14" stroke="#0a0a14" stroke-width="0.22" textLength="17" lengthAdjust="spacingAndGlyphs">560</text>
<text x="1484" y="460.1" font-size="11" fill="#0a0a14" stroke="#0a0a14" stroke-width="0.22" textLength="17" lengthAdjust="spacingAndGlyphs">580</text>
<text x="1484" y="441.5" font-size="11.5" font-weight="bold" fill="#000" textLength="20" lengthAdjust="spacingAndGlyphs">600</text>
<text x="1484" y="424.1" font-size="11" fill="#0a0a14" stroke="#0a0a14" stroke-width="0.22" textLength="17" lengthAdjust="spacingAndGlyphs">620</text>
<text x="1484" y="406.1" font-size="11" fill="#0a0a14" stroke="#0a0a14" stroke-width="0.22" textLength="17" lengthAdjust="spacingAndGlyphs">640</text>
<text x="1484" y="388.1" font-size="11" fill="#0a0a14" stroke="#0a0a14" stroke-width="0.22" textLength="17" lengthAdjust="spacingAndGlyphs">660</text>
<text x="1484" y="369.1" font-size="11" fill="#0a0a14" stroke="#0a0a14" stroke-width="0.22" textLength="17" lengthAdjust="spacingAndGlyphs">680</text>
<text x="1484" y="350.5" font-size="11.5" font-weight="bold" fill="#000" textLength="20" lengthAdjust="spacingAndGlyphs">700</text>
<text x="1484" y="333.1" font-size="11" fill="#0a0a14" stroke="#0a0a14" stroke-width="0.22" textLength="17" lengthAdjust="spacingAndGlyphs">720</text>
<text x="1484" y="315.1" font-size="11" fill="#0a0a14" stroke="#0a0a14" stroke-width="0.22" textLength="17" lengthAdjust="spacingAndGlyphs">740</text>
<text x="1484" y="297.1" font-size="11" fill="#0a0a14" stroke="#0a0a14" stroke-width="0.22" textLength="17" lengthAdjust="spacingAndGlyphs">760</text>
<text x="1484" y="279.1" font-size="11" fill="#0a0a14" stroke="#0a0a14" stroke-width="0.22" textLength="17" lengthAdjust="spacingAndGlyphs">780</text>
<text x="1484" y="260.5" font-size="11.5" font-weight="bold" fill="#000" textLength="20" lengthAdjust="spacingAndGlyphs">800</text>
<text x="1484" y="243.1" font-size="11" fill="#0a0a14" stroke="#0a0a14" stroke-width="0.22" textLength="17" lengthAdjust="spacingAndGlyphs">820</text>
<text x="1484" y="225.1" font-size="11" fill="#0a0a14" stroke="#0a0a14" stroke-width="0.22" textLength="17" lengthAdjust="spacingAndGlyphs">840</text>
<text x="1484" y="207.1" font-size="11" fill="#0a0a14" stroke="#0a0a14" stroke-width="0.22" textLength="17" lengthAdjust="spacingAndGlyphs">860</text>
<text x="1484" y="188.1" font-size="11" fill="#0a0a14" stroke="#0a0a14" stroke-width="0.22" textLength="17" lengthAdjust="spacingAndGlyphs">880</text>
<text x="1484" y="169.5" font-size="11.5" font-weight="bold" fill="#000" textLength="20" lengthAdjust="spacingAndGlyphs">900</text>
<text x="1484" y="152.1" font-size="11" fill="#0a0a14" stroke="#0a0a14" stroke-width="0.22" textLength="17" lengthAdjust="spacingAndGlyphs">920</text>
<text x="1484" y="134.1" font-size="11" fill="#0a0a14" stroke="#0a0a14" stroke-width="0.22" textLength="17" lengthAdjust="spacingAndGlyphs">940</text>
<text x="1484" y="116.1" font-size="11" fill="#0a0a14" stroke="#0a0a14" stroke-width="0.22" textLength="17" lengthAdjust="spacingAndGlyphs">960</text>
<text x="1484" y="98.1" font-size="11" fill="#0a0a14" stroke="#0a0a14" stroke-width="0.22" textLength="17" lengthAdjust="spacingAndGlyphs">980</text>
<text x="1484" y="79.5" font-size="11.5" font-weight="bold" fill="#000" textLength="31.5" lengthAdjust="spacingAndGlyphs">1 000</text>
<rect x="67" y="982" width="1" height="4" fill="#7a929c"/>
<text x="67.5" y="998" font-size="11.5" font-weight="bold" fill="#000" text-anchor="middle">11</text>
<rect x="165" y="982" width="1" height="4" fill="#7a929c"/>
<text x="165.5" y="998" font-size="11" fill="#0a0a14" stroke="#0a0a14" stroke-width="0.22" text-anchor="middle" textLength="26" lengthAdjust="spacingAndGlyphs">09:00</text>
<rect x="262" y="982" width="1" height="4" fill="#7a929c"/>
<text x="262.5" y="998" font-size="11" fill="#0a0a14" stroke="#0a0a14" stroke-width="0.22" text-anchor="middle" textLength="26" lengthAdjust="spacingAndGlyphs">10:00</text>
<rect x="360" y="982" width="1" height="4" fill="#7a929c"/>
<text x="360.5" y="998" font-size="11" fill="#0a0a14" stroke="#0a0a14" stroke-width="0.22" text-anchor="middle" textLength="26" lengthAdjust="spacingAndGlyphs">11:00</text>
<rect x="458" y="982" width="1" height="4" fill="#7a929c"/>
<text x="458.5" y="998" font-size="11" fill="#0a0a14" stroke="#0a0a14" stroke-width="0.22" text-anchor="middle" textLength="26" lengthAdjust="spacingAndGlyphs">12:00</text>
<rect x="556" y="982" width="1" height="4" fill="#7a929c"/>
<text x="556.5" y="998" font-size="11" fill="#0a0a14" stroke="#0a0a14" stroke-width="0.22" text-anchor="middle" textLength="26" lengthAdjust="spacingAndGlyphs">13:00</text>
<rect x="654" y="982" width="1" height="4" fill="#7a929c"/>
<text x="654.5" y="998" font-size="11" fill="#0a0a14" stroke="#0a0a14" stroke-width="0.22" text-anchor="middle" textLength="26" lengthAdjust="spacingAndGlyphs">14:00</text>
<rect x="751" y="982" width="1" height="4" fill="#7a929c"/>
<text x="751.5" y="998" font-size="11" fill="#0a0a14" stroke="#0a0a14" stroke-width="0.22" text-anchor="middle" textLength="26" lengthAdjust="spacingAndGlyphs">15:00</text>
<rect x="849" y="982" width="1" height="4" fill="#7a929c"/>
<text x="849.5" y="998" font-size="11" fill="#0a0a14" stroke="#0a0a14" stroke-width="0.22" text-anchor="middle" textLength="26" lengthAdjust="spacingAndGlyphs">16:00</text>
<rect x="947" y="982" width="1" height="4" fill="#7a929c"/>
<text x="947.5" y="998" font-size="11" fill="#0a0a14" stroke="#0a0a14" stroke-width="0.22" text-anchor="middle" textLength="26" lengthAdjust="spacingAndGlyphs">17:00</text>
<rect x="1045" y="982" width="1" height="4" fill="#7a929c"/>
<text x="1045.5" y="998" font-size="11" fill="#0a0a14" stroke="#0a0a14" stroke-width="0.22" text-anchor="middle" textLength="26" lengthAdjust="spacingAndGlyphs">18:00</text>
<rect x="1142" y="982" width="1" height="4" fill="#7a929c"/>
<text x="1142.5" y="998" font-size="11" fill="#0a0a14" stroke="#0a0a14" stroke-width="0.22" text-anchor="middle" textLength="26" lengthAdjust="spacingAndGlyphs">19:00</text>
<rect x="1240" y="982" width="1" height="4" fill="#7a929c"/>
<text x="1240.5" y="998" font-size="11" fill="#0a0a14" stroke="#0a0a14" stroke-width="0.22" text-anchor="middle" textLength="26" lengthAdjust="spacingAndGlyphs">20:00</text>
<rect x="1338" y="982" width="1" height="4" fill="#7a929c"/>
<text x="1338.5" y="998" font-size="11" fill="#0a0a14" stroke="#0a0a14" stroke-width="0.22" text-anchor="middle" textLength="26" lengthAdjust="spacingAndGlyphs">21:00</text>
<rect x="1436" y="982" width="1" height="4" fill="#7a929c"/>
<text x="1436.5" y="998" font-size="11.5" font-weight="bold" fill="#000" text-anchor="middle">12</text>
<rect x="3" y="58" width="94" height="17" fill="url(#gTab)"/>
<rect x="3" y="74" width="94" height="1" fill="#7f979f"/><rect x="96" y="58" width="1" height="17" fill="#7f979f"/>
<text x="6" y="70" font-size="11" fill="#0a0c18" stroke="#0a0c18" stroke-width="0.22" textLength="36" lengthAdjust="spacingAndGlyphs">Volume</text>
<path d="M46.8 70.6 L52 65.4 L52 59.8 L55.6 59.8 L55.6 62.8 L58.6 62.8 L58.6 66 L54.6 66 L48.4 72.2 Z" fill="#fff" stroke="#000" stroke-width="1.2" stroke-linejoin="round" shape-rendering="geometricPrecision"/>
<rect x="66.5" y="59.5" width="8" height="7" fill="#fff" stroke="#111" stroke-width="1"/><rect x="66" y="59" width="9" height="2" fill="#111"/>
<rect x="63.5" y="63.5" width="8" height="7.5" fill="#fff" stroke="#111" stroke-width="1"/><rect x="63" y="63" width="9" height="2" fill="#111"/>
<circle cx="86.5" cy="65.5" r="6.5" fill="#2a2a2a" shape-rendering="geometricPrecision"/>
<path d="M84 63 L89 68 M89 63 L84 68" stroke="#fff" stroke-width="1.8" shape-rendering="geometricPrecision"/>
<text x="5" y="979" font-size="11" fill="#0a0c18" stroke="#0a0c18" stroke-width="0.22" textLength="93" lengthAdjust="spacingAndGlyphs">© ProRealTime.com</text>
<text x="104" y="979" font-size="11" font-style="italic" fill="#0a0c18" stroke="#0a0c18" stroke-width="0.22" textLength="113" lengthAdjust="spacingAndGlyphs">Données en temps réel</text>
</svg></body></html>
